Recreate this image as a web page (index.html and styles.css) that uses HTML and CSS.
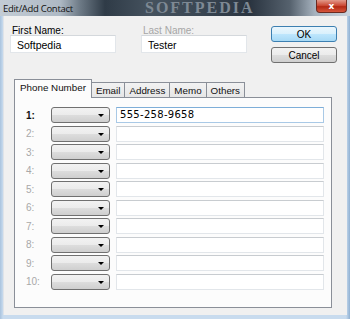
FILE: index.html
```html
<!DOCTYPE html>
<html>

<head>
    <title>Edit/Add Contact</title>
    <link rel="stylesheet" href="styles.css">
</head>

<body>
    <div class="window">
        <div class="titlebar">
            <span class="title">Edit/Add Contact</span>
            <span class="watermark">SOFTPEDIA</span>
            <button class="close">x</button>
        </div>

        <div class="client">
            <div class="top">
                <div class="field">
                    <label>First Name:</label>
                    <div class="input">Softpedia</div>
                </div>
                <div class="field">
                    <label class="muted">Last Name:</label>
                    <div class="input">Tester</div>
                </div>
                <div class="buttons">
                    <button class="btn default">OK</button>
                    <button class="btn">Cancel</button>
                </div>
            </div>

            <div class="tabs">
                <div class="tab active">Phone Number</div>
                <div class="tab">Email</div>
                <div class="tab">Address</div>
                <div class="tab">Memo</div>
                <div class="tab">Others</div>
            </div>

            <div class="panel">
                <div class="row">
                    <span class="num first">1:</span>
                    <div class="combo"><span class="arrow"></span></div>
                    <div class="text focus">555-258-9658</div>
                </div>
                <div class="row">
                    <span class="num">2:</span>
                    <div class="combo"><span class="arrow"></span></div>
                    <div class="text"></div>
                </div>
                <div class="row">
                    <span class="num">3:</span>
                    <div class="combo"><span class="arrow"></span></div>
                    <div class="text"></div>
                </div>
                <div class="row">
                    <span class="num">4:</span>
                    <div class="combo"><span class="arrow"></span></div>
                    <div class="text"></div>
                </div>
                <div class="row">
                    <span class="num">5:</span>
                    <div class="combo"><span class="arrow"></span></div>
                    <div class="text"></div>
                </div>
                <div class="row">
                    <span class="num">6:</span>
                    <div class="combo"><span class="arrow"></span></div>
                    <div class="text"></div>
                </div>
                <div class="row">
                    <span class="num">7:</span>
                    <div class="combo"><span class="arrow"></span></div>
                    <div class="text"></div>
                </div>
                <div class="row">
                    <span class="num">8:</span>
                    <div class="combo"><span class="arrow"></span></div>
                    <div class="text"></div>
                </div>
                <div class="row">
                    <span class="num">9:</span>
                    <div class="combo"><span class="arrow"></span></div>
                    <div class="text"></div>
                </div>
                <div class="row">
                    <span class="num">10:</span>
                    <div class="combo"><span class="arrow"></span></div>
                    <div class="text"></div>
                </div>
            </div>
        </div>
    </div>
</body>

</html>
```

FILE: styles.css
```css
body {
    margin: 0;
    background-color: #c6d8eb;
    font-family: "Liberation Sans", Arial, sans-serif;
    font-size: 10px;
    color: #000000;
}

.window {
    width: 350px;
    height: 319px;
    display: flex;
    flex-direction: column;
    background: linear-gradient(to right, #a9c3de, #c8dbee 3px, #c8dbee 346px, #8fb0d2);
    overflow: hidden;
}

/* barra del titolo */
.titlebar {
    position: relative;
    height: 16px;
    flex-shrink: 0;
    display: flex;
    align-items: center;
    background: linear-gradient(to right, #c3ccd5 0, #aeb9c4 60px, #6d7a86 80px, #2f3b47 105px, #45525e 150px, #3a4652 200px, #2a3440 250px, #56626e 290px, #a7b3bf 315px, #c9d3dd 350px);
    overflow: hidden;
}

.title {
    padding-left: 3px;
    font-family: "Open Sans", "Liberation Sans", sans-serif;
    font-size: 9.5px;
    letter-spacing: -0.3px;
    color: #111111;
    position: relative;
    z-index: 1;
}

.watermark {
    position: absolute;
    left: 145px;
    top: 0;
    font-family: "Liberation Serif", serif;
    font-weight: bold;
    font-size: 16px;
    line-height: 16px;
    letter-spacing: 2px;
    color: #7e8994;
}

.close {
    position: absolute;
    right: 3px;
    top: 0;
    width: 31px;
    height: 13px;
    padding: 0;
    border: 1px solid #6b2a20;
    border-top: none;
    border-radius: 0 0 4px 4px;
    background: linear-gradient(#e29a8a, #c9432d 50%, #b32a14 55%, #d6563c);
    color: #ffffff;
    font-family: "DejaVu Sans", sans-serif;
    font-weight: bold;
    font-size: 9px;
    line-height: 10px;
}

/* area interna */
.client {
    flex: 1;
    margin: 0 3px 4px 3px;
    background-color: #f0f0f0;
    border-left: 1px solid #dfe3e8;
    display: flex;
    flex-direction: column;
}

.top {
    display: flex;
    padding: 10px 0 0 6px;
    height: 53px;
    box-sizing: border-box;
}

.field {
    display: flex;
    flex-direction: column;
    width: 106px;
    margin-right: 25px;
}

.field label {
    padding-left: 2px;
    height: 9px;
    line-height: 9px;
}

.muted {
    color: #a6a6a6;
}

.input {
    height: 18px;
    box-sizing: border-box;
    border: 1px solid #e2e6ea;
    border-top-color: #d4d8dc;
    background-color: #ffffff;
    padding: 3px 0 0 6px;
    font-size: 10.5px;
}

.buttons {
    display: flex;
    flex-direction: column;
    gap: 5px;
    margin-left: -1px;
}

.btn {
    width: 66px;
    height: 16px;
    padding: 0;
    border: 1px solid #707070;
    border-radius: 3px;
    background: linear-gradient(#f2f2f2, #ebebeb 50%, #dddddd 51%, #cfcfcf);
    font-family: "Liberation Sans", Arial, sans-serif;
    font-size: 10px;
    color: #000000;
}

.btn.default {
    border-color: #3c7fb1;
    background: linear-gradient(#eaf6fd, #d9f0fc 50%, #bee6fd 51%, #a7d9f5);
}

/* schede */
.tabs {
    display: flex;
    align-items: flex-end;
    padding-left: 10px;
    height: 28px;
    box-sizing: border-box;
}

.tab {
    height: 14px;
    padding: 0 4px;
    border: 1px solid #8a8f98;
    border-bottom: none;
    margin-left: -1px;
    background: linear-gradient(#f2f2f2, #e6e6e6);
    font-size: 9.8px;
    line-height: 15px;
    color: #111111;
    white-space: nowrap;
}

.tab.active {
    height: 18px;
    margin-left: 0;
    padding: 0 5px;
    line-height: 16px;
    background-color: #fcfcfc;
    background-image: none;
    position: relative;
    z-index: 1;
    margin-bottom: -1px;
}

.panel {
    margin-left: 10px;
    width: 318px;
    height: 211px;
    box-sizing: border-box;
    border: 1px solid #8a8f98;
    background-color: #fcfcfc;
    padding: 9px 0 0 0;
    display: flex;
    flex-direction: column;
    gap: 2.5px;
}

.row {
    display: flex;
    align-items: center;
    height: 16px;
}

.num {
    width: 36px;
    padding-left: 11px;
    box-sizing: border-box;
    color: #a8a8a8;
    font-size: 10px;
}

.num.first {
    color: #111111;
    font-weight: bold;
}

.combo {
    position: relative;
    width: 59px;
    height: 16px;
    box-sizing: border-box;
    border: 1px solid #707070;
    border-radius: 3px;
    background: linear-gradient(#f2f2f2, #ebebeb 50%, #dddddd 51%, #cfcfcf);
}

.arrow {
    position: absolute;
    right: 5px;
    top: 6px;
    width: 0;
    height: 0;
    border-left: 3px solid transparent;
    border-right: 3px solid transparent;
    border-top: 3px solid #000000;
}

.text {
    margin-left: 6px;
    width: 208px;
    height: 16px;
    box-sizing: border-box;
    border: 1px solid #e2e6ea;
    border-top-color: #c8ccd0;
    background-color: #ffffff;
    padding: 1px 0 0 3px;
    font-family: "DejaVu Sans", sans-serif;
    font-size: 10px;
    letter-spacing: 0.3px;
}

.text.focus {
    border-color: #a9c9e6;
    border-top-color: #7eaed8;
}
```
